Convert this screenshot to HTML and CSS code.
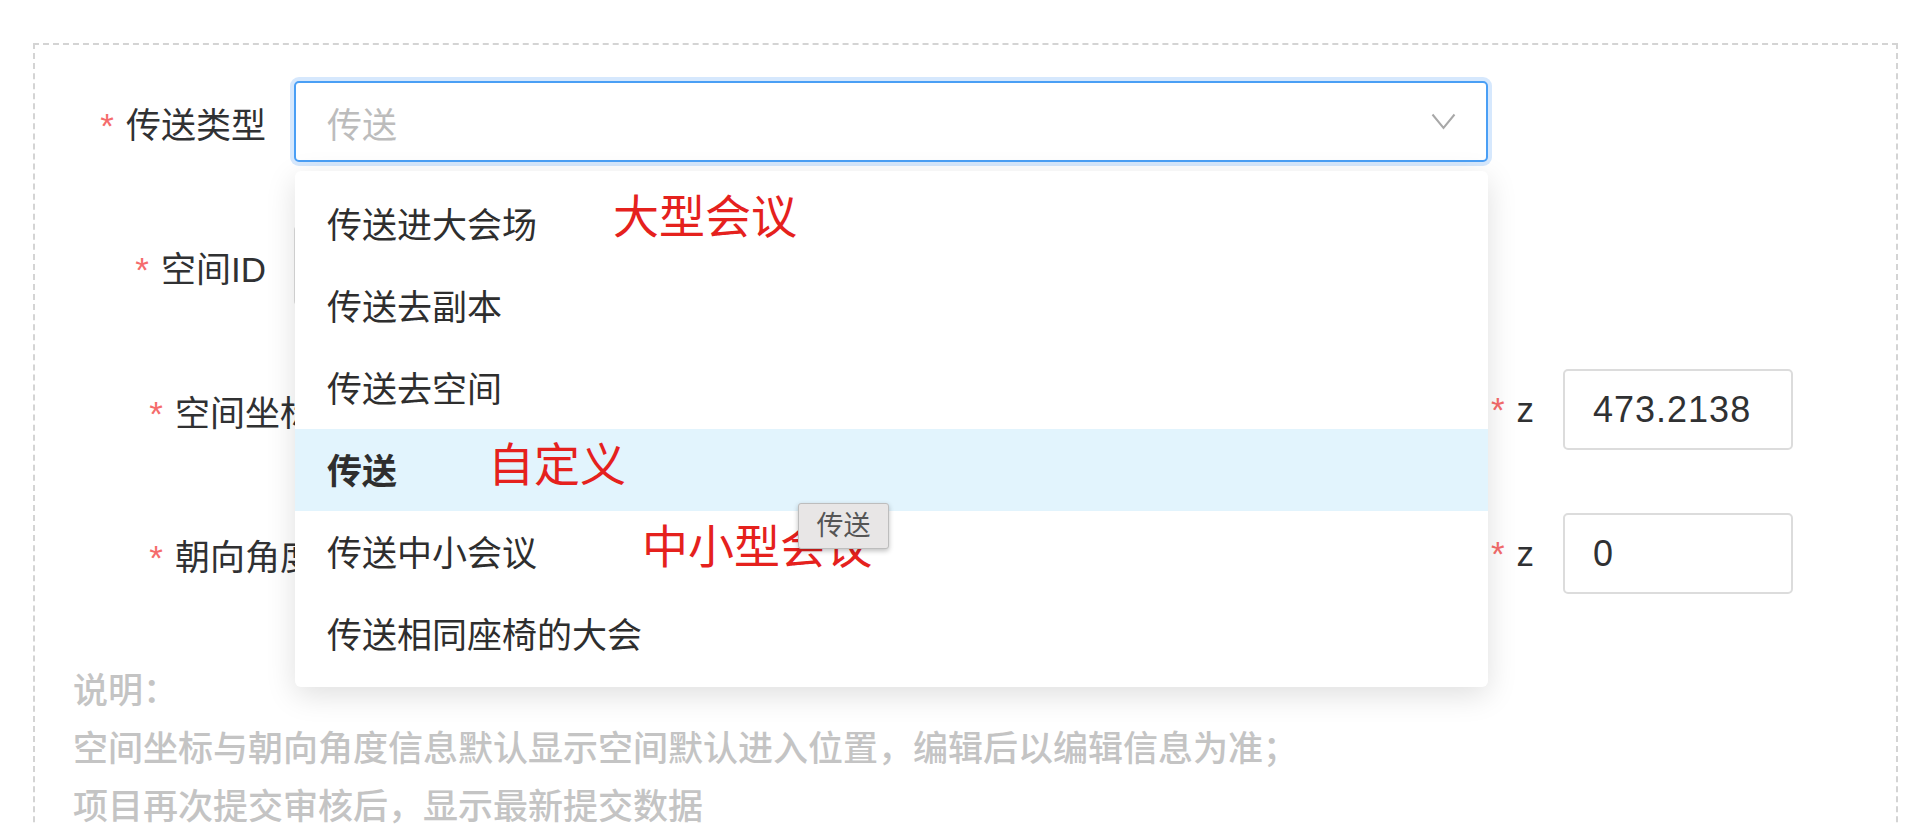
FILE: index.html
```html
<!DOCTYPE html>
<html>
<head lang="zh">
    <meta charset="UTF-8">
    <title>传送设置</title>
    <link rel="stylesheet" href="styles.css">
</head>
<body>
<div class="panel">
    <!--传送类型-->
    <div class="row">
        <label class="label required">传送类型</label>
        <div class="select-wrap">
            <div class="select is-focus">
                <span class="placeholder">传送</span>
                <svg class="arrow" width="25" height="17" viewBox="0 0 25 17">
                    <polyline points="1.5,1.5 12.5,15 23.5,1.5" fill="none" stroke="#a8a8a8" stroke-width="2"/>
                </svg>
            </div>
            <!--下拉选项-->
            <div class="dropdown">
                <ul class="options">
                    <li>传送进大会场</li>
                    <li>传送去副本</li>
                    <li>传送去空间</li>
                    <li class="hover">传送</li>
                    <li>传送中小会议</li>
                    <li>传送相同座椅的大会</li>
                </ul>
                <span class="mark mark-big">大型会议</span>
                <span class="mark mark-custom">自定义</span>
                <span class="mark mark-small">中小型会议</span>
                <div class="tip">传送</div>
            </div>
        </div>
    </div>
    <!--空间ID-->
    <div class="row">
        <label class="label required">空间ID</label>
        <input class="input wide" type="text" value="">
    </div>
    <!--空间坐标-->
    <div class="row">
        <label class="label label-coord required">空间坐标</label>
        <div class="coords">
            <div class="coord"><span class="required">x</span><input class="input small" type="text" value="0"></div>
            <div class="coord"><span class="required">y</span><input class="input small" type="text" value="0"></div>
            <div class="coord"><span class="required">z</span><input class="input small" type="text" value="473.2138"></div>
        </div>
    </div>
    <!--朝向角度-->
    <div class="row">
        <label class="label label-coord required">朝向角度</label>
        <div class="coords">
            <div class="coord"><span class="required">x</span><input class="input small" type="text" value="0"></div>
            <div class="coord"><span class="required">y</span><input class="input small" type="text" value="0"></div>
            <div class="coord"><span class="required">z</span><input class="input small" type="text" value="0"></div>
        </div>
    </div>
    <!--说明-->
    <div class="notes">
        <p>说明：</p>
        <p>空间坐标与朝向角度信息默认显示空间默认进入位置，编辑后以编辑信息为准；</p>
        <p>项目再次提交审核后，显示最新提交数据</p>
    </div>
</div>
</body>
</html>
```

FILE: styles.css
```css
html,body{
    margin: 0;
    height: 100%;
    overflow: hidden;
    background-color: #fff;
}
body{
    font-family: "Liberation Sans", "Noto Sans CJK SC", sans-serif;
    font-size: 35px;
    color: #303133;
}
/*外框*/
.panel{
    position: relative;
    width: 1861px;
    margin: 43px 0 0 33px;
    padding-top: 36px;
    min-height: 900px;
    border: 2px dashed #d4d4d4;
}
.row{
    display: flex;
    align-items: center;
    height: 81px;
    margin-bottom: 63px;
}
.label{
    width: 259px;
    flex-shrink: 0;
    box-sizing: border-box;
    padding-right: 28px;
    padding-top: 2px;
    text-align: right;
    white-space: nowrap;
}
.label-coord{
    width: 308px;
}
.required:before{
    content: "*";
    color: #f56c6c;
    margin-right: 12px;
}
/*下拉框*/
.select-wrap{
    position: relative;
}
.select{
    width: 1194px;
    height: 81px;
    box-sizing: border-box;
    border: 2px solid #dcdcdc;
    border-radius: 5px;
    padding: 0 30px 0 31px;
    display: flex;
    align-items: center;
    justify-content: space-between;
    background-color: #fff;
}
.select.is-focus{
    border-color: #4a9ff5;
    box-shadow: 0 0 0 4px #d6e8fd;
}
.placeholder{
    color: #bcbcbc;
    padding-top: 2px;
}
.arrow{
    display: block;
}
.input{
    height: 81px;
    box-sizing: border-box;
    border: 2px solid #dcdcdc;
    border-radius: 5px;
    padding: 0 28px;
    font-family: inherit;
    font-size: 36px;
    letter-spacing: 1px;
    color: #303133;
    background-color: #fff;
    outline: none;
}
.wide{
    width: 1194px;
}
.small{
    width: 230px;
    margin-left: 29px;
}
.coords{
    width: 1450px;
    display: flex;
    justify-content: space-between;
}
.coord{
    display: flex;
    align-items: center;
}
.dropdown{
    position: absolute;
    top: 90px;
    left: 1px;
    width: 1193px;
    padding: 12px 0;
    background-color: #fff;
    border-radius: 6px;
    box-shadow: 0 8px 30px rgba(0,0,0,.13);
    z-index: 10;
}
.options{
    list-style: none;
    margin: 0;
    padding: 0;
}
.options li{
    height: 82px;
    box-sizing: border-box;
    padding: 4px 32px 0;
    line-height: 78px;
    color: #2e2e2e;
}
.options li.hover{
    background-color: #e2f4fd;
    font-weight: bold;
}
/*红色标注*/
.mark{
    position: absolute;
    font-size: 46px;
    line-height: 46px;
    color: #e5211d;
    white-space: nowrap;
}
.mark-big{
    left: 318px;
    top: 23px;
}
.mark-custom{
    left: 193px;
    top: 271px;
}
.mark-small{
    left: 347px;
    top: 353px;
}
.tip{
    position: absolute;
    left: 503px;
    top: 332px;
    width: 91px;
    height: 46px;
    box-sizing: border-box;
    line-height: 44px;
    text-align: center;
    font-size: 27px;
    color: #555;
    background-color: #e8e6e6;
    border: 1px solid #bdbdbd;
    border-radius: 3px;
    box-shadow: 0 2px 5px rgba(0,0,0,.25);
}
/*说明*/
.notes{
    padding-left: 38px;
    padding-top: 5px;
    color: #c4c4c4;
    font-weight: 500;
    line-height: 58px;
}
.notes p{
    margin: 0;
}
```
